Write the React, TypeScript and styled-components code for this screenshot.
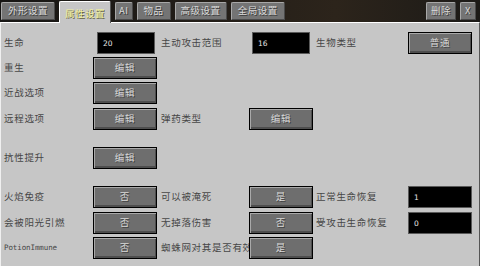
import React from "react";
import styled, { createGlobalStyle } from "styled-components";

const Global = createGlobalStyle`
  html, body { margin: 0; padding: 0; background: #1b1916; }
  body { width: 480px; height: 266px; overflow: hidden; font-family: "Noto Sans CJK SC", "Noto Sans", sans-serif; }
`;

const Screen = styled.div`
  width: 480px;
  height: 266px;
  display: flex;
  flex-direction: column;
  background: linear-gradient(90deg, #171614 0%, #221d18 40%, #2c241b 70%, #1c1a17 100%);
`;

const TabBar = styled.div`
  height: 22px;
  display: flex;
  align-items: flex-end;
  justify-content: space-between;
  padding: 0 4px 0 1px;
  position: relative;
  z-index: 1;
`;

const TabGroup = styled.div`
  display: flex;
  align-items: flex-end;
  gap: 4px;
`;

const Tab = styled.div<{ $active?: boolean; $px?: number }>`
  box-sizing: border-box;
  height: ${(p) => (p.$active ? 22 : 18)}px;
  margin-bottom: ${(p) => (p.$active ? -1 : 2)}px;
  padding: 0 ${(p) => p.$px ?? 6}px;
  display: flex;
  align-items: center;
  justify-content: center;
  font-size: 9.5px;
  line-height: 1;
  letter-spacing: 0.5px;
  white-space: nowrap;
  border-radius: 2px 2px 0 0;
  color: ${(p) => (p.$active ? "#f0f0a0" : "#d8d8d8")};
  text-shadow: ${(p) => (p.$active ? "1px 1px 0 #5e5e3e" : "1px 1px 0 #3a3a3a")};
  background: ${(p) => (p.$active ? "#c6c6c6" : "#747474")};
  border-top: 1px solid ${(p) => (p.$active ? "#ffffff" : "#a8a8a8")};
  border-left: 1px solid ${(p) => (p.$active ? "#ffffff" : "#a8a8a8")};
  border-right: 1px solid ${(p) => (p.$active ? "#555555" : "#4a4a4a")};
  border-bottom: ${(p) => (p.$active ? "none" : "1px solid #4a4a4a")};
  padding-top: ${(p) => (p.$active ? 2 : 0)}px;
`;

const Panel = styled.div`
  flex: 1;
  background: #c6c6c6;
  border-top: 1px solid #ffffff;
  border-left: 1px solid #f0f0f0;
  border-right: 1px solid #555555;
  display: flex;
  flex-direction: column;
  padding: 9px 0 0 3px;
`;

const Row = styled.div<{ $mt: number }>`
  display: grid;
  grid-template-columns: 89px 68px 88px 67px 92px 64px;
  height: 22px;
  align-items: center;
  margin-top: ${(p) => p.$mt}px;
`;

const Label = styled.div<{ $mono?: boolean }>`
  color: #464646;
  font-family: ${(p) =>
    p.$mono ? '"DejaVu Sans Mono", "Liberation Mono", monospace' : '"Noto Sans CJK SC", sans-serif'};
  font-size: ${(p) => (p.$mono ? "7.5px" : "9.5px")};
  letter-spacing: ${(p) => (p.$mono ? "-0.1px" : "0.7px")};
  white-space: nowrap;
  line-height: 1;
`;

const Button = styled.div`
  box-sizing: border-box;
  width: 64px;
  height: 22px;
  background: #6e6e6e;
  border: 1px solid #000;
  box-shadow: inset 1px 1px 0 #a9a9a9, inset -1px -2px 0 #4e4e4e;
  display: flex;
  align-items: center;
  justify-content: center;
  color: #d8d8d8;
  font-size: 9.5px;
  letter-spacing: 0.8px;
  text-shadow: 1px 1px 0 #444444;
  line-height: 1;
`;

const Field = styled.div<{ $w: number; $ml: number }>`
  box-sizing: border-box;
  width: ${(p) => p.$w}px;
  margin-left: ${(p) => p.$ml}px;
  height: 22px;
  background: #000;
  border: 1px solid #5a5a5a;
  color: #e8e8e8;
  font-family: "DejaVu Sans", sans-serif;
  font-size: 7.5px;
  display: flex;
  align-items: center;
  padding-left: 5px;
`;

const Empty = styled.div``;

type Cell =
  | { k: "label"; t: string; mono?: boolean }
  | { k: "btn"; t: string }
  | { k: "field"; t: string; w: number; ml: number }
  | { k: "none" };

const L = (t: string, mono = false): Cell => ({ k: "label", t, mono });
const B = (t: string): Cell => ({ k: "btn", t });
const F = (t: string, w = 64, ml = 0): Cell => ({ k: "field", t, w, ml });

const rows: { mt: number; cells: Cell[] }[] = [
  { mt: 0, cells: [L("生命"), F("20", 58, 4), L("主动攻击范围"), F("16", 58, 3), L("生物类型"), B("普通")] },
  { mt: 3, cells: [L("重生"), B("编辑")] },
  { mt: 3, cells: [L("近战选项"), B("编辑")] },
  { mt: 4, cells: [L("远程选项"), B("编辑"), L("弹药类型"), B("编辑")] },
  { mt: 17, cells: [L("抗性提升"), B("编辑")] },
  { mt: 17, cells: [L("火焰免疫"), B("否"), L("可以被淹死"), B("是"), L("正常生命恢复"), F("1")] },
  { mt: 4, cells: [L("会被阳光引燃"), B("否"), L("无掉落伤害"), B("否"), L("受攻击生命恢复"), F("0")] },
  { mt: 3, cells: [L("PotionImmune", true), B("否"), L("蜘蛛网对其是否有效"), B("是")] },
];

const renderCell = (c: Cell, i: number) => {
  switch (c.k) {
    case "label":
      return <Label key={i} $mono={c.mono}>{c.t}</Label>;
    case "btn":
      return <Button key={i}>{c.t}</Button>;
    case "field":
      return <Field key={i} $w={c.w} $ml={c.ml}>{c.t}</Field>;
    default:
      return <Empty key={i} />;
  }
};

export default function App() {
  return (
    <>
      <Global />
      <Screen>
        <TabBar>
          <TabGroup>
            <Tab $px={6}>外形设置</Tab>
            <Tab $active $px={5}>属性设置</Tab>
            <Tab $px={3}>AI</Tab>
            <Tab $px={6}>物品</Tab>
            <Tab $px={5}>高级设置</Tab>
            <Tab $px={6}>全局设置</Tab>
          </TabGroup>
          <TabGroup>
            <Tab $px={4}>删除</Tab>
            <Tab $px={4}>X</Tab>
          </TabGroup>
        </TabBar>
        <Panel>
          {rows.map((r, ri) => (
            <Row key={ri} $mt={r.mt}>
              {r.cells.map(renderCell)}
            </Row>
          ))}
        </Panel>
      </Screen>
    </>
  );
}
